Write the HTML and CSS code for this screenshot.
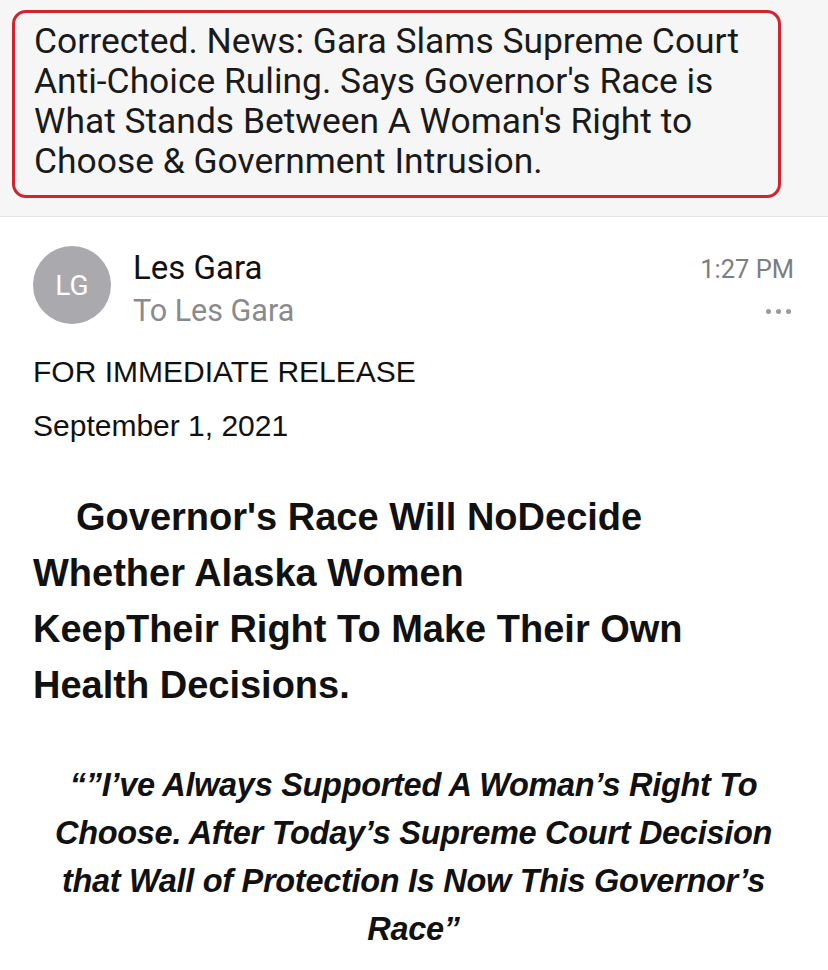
FILE: index.html
```html
<!DOCTYPE html>
<html lang="en">
<head>
    <meta charset="UTF-8">
    <meta name="viewport" content="width=device-width, initial-scale=1.0">
    <title>Corrected. News: Gara Slams Supreme Court Anti-Choice Ruling</title>
    <link rel="stylesheet" href="styles.css">
</head>
<body>
    <div class="subject-bar">
        <div class="subject">
            Corrected. News: Gara Slams Supreme Court<br>
            Anti-Choice Ruling. Says Governor's Race is<br>
            What Stands Between A Woman's Right to<br>
            Choose &amp; Government Intrusion.
        </div>
    </div>
    <div class="message">
        <div class="header">
            <div class="avatar">LG</div>
            <div class="sender">
                <div class="name">Les Gara</div>
                <div class="to">To Les Gara</div>
            </div>
            <div class="meta">
                <div class="time">1:27 PM</div>
                <div class="more"><span></span><span></span><span></span></div>
            </div>
        </div>
        <div class="body">
            <p class="release">FOR IMMEDIATE RELEASE</p>
            <p class="date">September 1, 2021</p>
            <h1 class="headline">Governor's Race Will NoDecide<br>Whether Alaska Women<br>KeepTheir Right To Make Their Own<br>Health Decisions.</h1>
            <p class="quote">“”I’ve Always Supported A Woman’s Right To<br>Choose. After Today’s Supreme Court Decision<br>that Wall of Protection Is Now This Governor’s<br>Race”</p>
        </div>
    </div>
</body>
</html>
```

FILE: styles.css
```css
body {
    margin: 0;
    background-color: white;
    font-family: Roboto, "Liberation Sans", sans-serif;
    color: #1c1c1e;
}
.subject-bar {
    background-color: #f6f6f6;
    padding: 10px 47px 18px 12px;
    border-bottom: 1px solid #e2e2e2;
}
.subject {
    border: 3px solid #d2232e;
    border-radius: 14px;
    padding: 8px 10px 14px 19px;
    font-size: 35.4px;
    line-height: 40px;
    color: #1a1a1a;
    white-space: nowrap;
}
.message {
    padding: 29px 34px 0 33px;
}
.header {
    display: flex;
    align-items: flex-start;
}
.avatar {
    width: 78px;
    height: 78px;
    border-radius: 50%;
    background-color: #a9a9ae;
    color: white;
    font-size: 28px;
    display: flex;
    align-items: center;
    justify-content: center;
    flex-shrink: 0;
}
.sender {
    flex: 1;
    margin-left: 22px;
    margin-top: 1px;
}
.name {
    font-size: 33px;
    line-height: 42px;
    color: #111;
}
.to {
    font-size: 30.5px;
    line-height: 44px;
    color: #8a8a8e;
}
.meta {
    text-align: right;
    margin-top: 6px;
}
.time {
    font-size: 25.5px;
    line-height: 34px;
    color: #7d7d80;
}
.more {
    display: flex;
    justify-content: flex-end;
    gap: 5px;
    margin-top: 23px;
    padding-right: 3px;
}
.more span {
    width: 5px;
    height: 5px;
    border-radius: 50%;
    background-color: #9a9a9e;
}
.body {
    font-family: "Liberation Sans", Arial, sans-serif;
    color: #111;
}
.release {
    font-size: 30px;
    line-height: 40px;
    margin: 19px 0 0 0;
}
.date {
    font-size: 30px;
    line-height: 40px;
    margin: 14px 0 0 0;
}
.headline {
    font-size: 38px;
    line-height: 56px;
    font-weight: bold;
    text-indent: 43px;
    margin: 43px 0 0 0;
    white-space: nowrap;
}
.quote {
    font-size: 32.5px;
    line-height: 48px;
    font-weight: bold;
    font-style: italic;
    text-align: center;
    margin: 48px 0 0 0;
    letter-spacing: -0.3px;
    white-space: nowrap;
}
```
